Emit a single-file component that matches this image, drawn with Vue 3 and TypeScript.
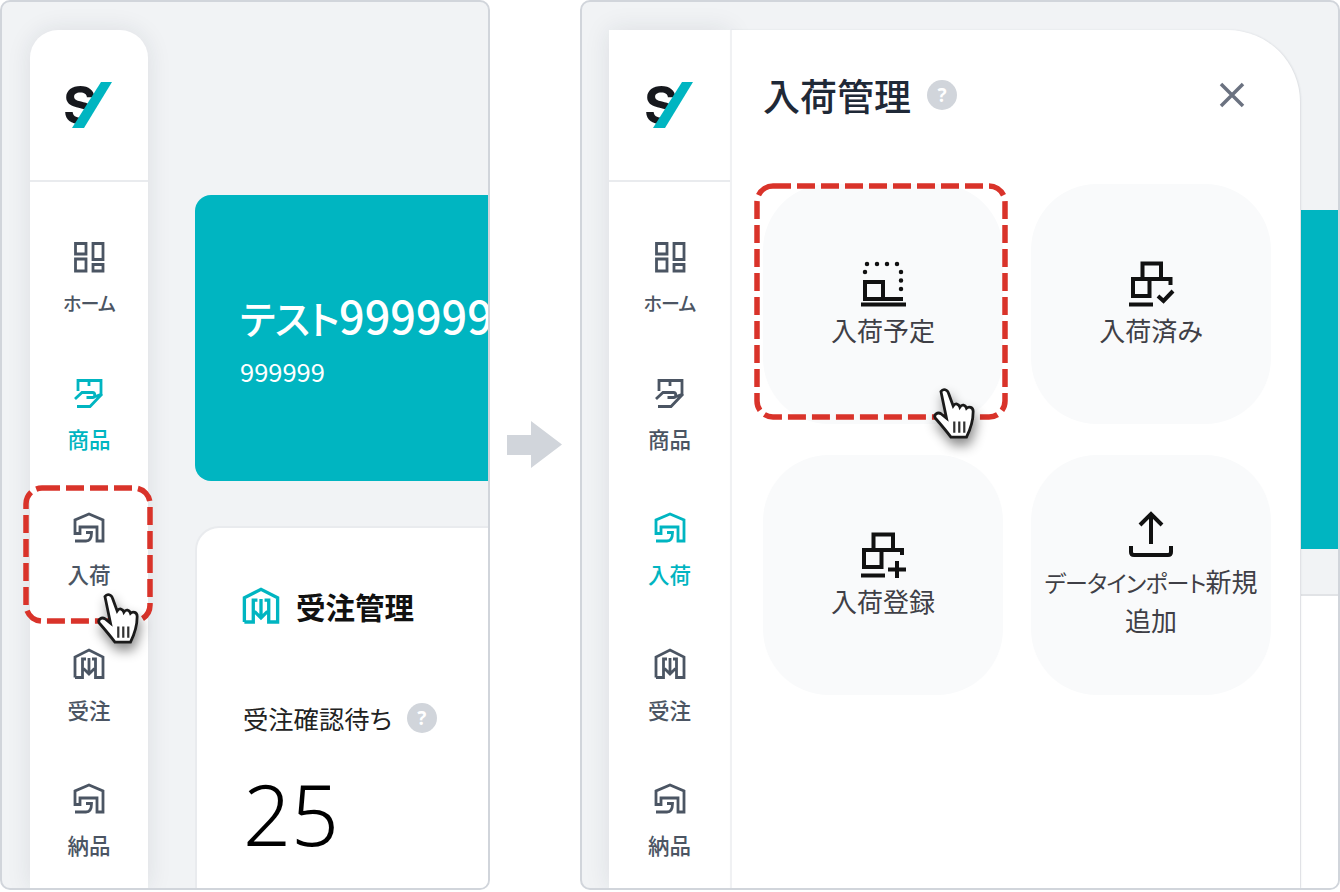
<script setup lang="ts">
interface NavItem {
  label: string;
  icon: 'home' | 'product' | 'arrival' | 'order';
  active?: boolean;
  kana?: boolean;
}

interface Tile {
  kana?: string;
  label: string;
  icon: 'planned' | 'done' | 'add' | 'upload';
}

const iconPaths: Record<string, string> = {
  home: 'M2.500 2.500H13V13H2.500ZM20 2.500H30V18.500H20ZM2.500 18H13V30H2.500ZM20 23.500H30V30H20Z',
  product: 'M5 14V3.500H28V17M16 3.500V9M2 22L9 15.500H19.500C22.500 15.500 22.500 20.500 19.500 20.500H13.500M19.500 20.500L29 17L17 29.500H4',
  arrival: 'M2 21.500V8L16 2L30 8V29H24V15H7V21.500ZM2 29H13C16.500 29 18.500 26.500 18.500 20.500H13',
  order: 'M2 29.500V9L16 2L30 9V29.500H22.500V11H19M2 29.500H9.500V11H13M16 10V26M10.500 20.500L16 26L21.500 20.500',
};

const tileIcons: Record<string, string> = {
  done: 'M14.500 3.500H33V19H14.500ZM5 19H21.500V36H5ZM21.500 19H42.500V25M1 44.500H25M30 36L35.500 41L45 31',
  add: 'M13.500 3.500H33V19H13.500ZM4 19H21.500V36H4ZM21.500 19H42V24M1 44.500H25M37 30V47M28 38.500H46',
  planned: 'M5 22H23V39H5ZM23 39H43M1 44.500H46',
  upload: 'M23 4V33M12 14L23 3L34 14M3 35V41C3 43 4 44 6 44H40C42 44 43 43 43 41V35',
};

// the dotted outline of the planned-arrival box
const plannedDots = 'M7 4h0M17 4h0M27 4h0M37 4h0M5 12h0M41 12h0M41 20.500h0M41 29h0';

const navItems: NavItem[] = [
  { label: 'ホーム', icon: 'home', kana: true },
  { label: '商品', icon: 'product', active: true },
  { label: '入荷', icon: 'arrival' },
  { label: '受注', icon: 'order' },
  { label: '納品', icon: 'arrival' },
];

const drawerNavItems: NavItem[] = navItems.map((item) => ({
  ...item,
  active: item.label === '入荷',
}));

const tiles: Tile[] = [
  { label: '入荷予定', icon: 'planned' },
  { label: '入荷済み', icon: 'done' },
  { label: '入荷登録', icon: 'add' },
  { kana: 'データインポート', label: '新規追加', icon: 'upload' },
];
</script>

<template>
  <div class="page">
    <!-- Before -->
    <section class="frame frame-left">
      <aside class="sidebar sidebar-rounded">
        <div class="logo-box">
          <svg class="logo" viewBox="0 0 50 46">
            <text x="-1" y="42" class="logo-s">S</text>
            <path d="M37 -1H60V47H20Z" fill="#fff" />
            <path d="M37 0H48L20 46H8Z" fill="#00b5c1" />
          </svg>
        </div>
        <nav class="nav">
          <div v-for="item in navItems" :key="item.label" class="nav-item" :class="{ active: item.active }">
            <svg class="nav-icon" viewBox="0 0 32 32">
              <path :d="iconPaths[item.icon]" />
            </svg>
            <span :class="{ 'kana-nav': item.kana }">{{ item.label }}</span>
          </div>
        </nav>
      </aside>
      <main class="content">
        <div class="hero">
          <div class="hero-name"><span class="kana-hero">テスト</span>999999</div>
          <div class="hero-code">999999</div>
        </div>
        <div class="order-card">
          <div class="order-title">
            <svg class="order-icon" viewBox="0 0 32 32">
              <path :d="iconPaths.order" />
            </svg>
            <span>受注管理</span>
          </div>
          <div class="order-label">
            <span>受注確認待ち</span>
            <span class="help">?</span>
          </div>
          <div class="order-count">25</div>
        </div>
      </main>
      <svg class="dash dash-nav" viewBox="0 0 130 139">
        <rect x="3" y="3" width="124" height="133" rx="16" />
      </svg>
      <svg class="cursor cursor-nav" viewBox="0 0 44 54">
        <path class="cursor-body" d="M8 5C10 2 14 3 15 7L19 18C21 15 24 16 25 19C27 16 30 17 31 20C33 18 37 19 37 23C37 30 35 38 31 46H17C14 42 10 37 3 29C1 26 5 23 8 25L13 29Z" />
        <path class="cursor-lines" d="M20 32V42M24.500 32V42M29 32V42" />
      </svg>
    </section>

    <div class="arrow-col">
      <svg class="arrow" viewBox="0 0 56 48">
        <path d="M0 14H24V0L55 23.500L24 47V34H0Z" fill="#d1d5db" />
      </svg>
    </div>

    <!-- After -->
    <section class="frame frame-right">
      <div class="strip">
        <div class="strip-teal"></div>
        <div class="strip-white"></div>
      </div>
      <aside class="sidebar sidebar-flat">
        <div class="logo-box">
          <svg class="logo" viewBox="0 0 50 46">
            <text x="-1" y="42" class="logo-s">S</text>
            <path d="M37 -1H60V47H20Z" fill="#fff" />
            <path d="M37 0H48L20 46H8Z" fill="#00b5c1" />
          </svg>
        </div>
        <nav class="nav">
          <div v-for="item in drawerNavItems" :key="item.label" class="nav-item" :class="{ active: item.active }">
            <svg class="nav-icon" viewBox="0 0 32 32">
              <path :d="iconPaths[item.icon]" />
            </svg>
            <span :class="{ 'kana-nav': item.kana }">{{ item.label }}</span>
          </div>
        </nav>
      </aside>
      <div class="drawer">
        <header class="drawer-head">
          <h2>入荷管理</h2>
          <span class="help">?</span>
          <svg class="close" viewBox="0 0 26 26">
            <path d="M2 2L24 24M24 2L2 24" />
          </svg>
        </header>
        <div class="tiles">
          <div v-for="tile in tiles" :key="tile.label" class="tile">
            <svg class="tile-icon" viewBox="0 0 47 48">
              <path :d="tileIcons[tile.icon]" />
              <path v-if="tile.icon === 'planned'" class="dots" :d="plannedDots" />
            </svg>
            <span class="tile-label"><span v-if="tile.kana" class="kana-tile">{{ tile.kana }}</span>{{ tile.label }}</span>
          </div>
        </div>
      </div>
      <svg class="dash dash-tile" viewBox="0 0 254 237">
        <rect x="3" y="3" width="248" height="231" rx="16" />
      </svg>
      <svg class="cursor cursor-tile" viewBox="0 0 44 54">
        <path class="cursor-body" d="M8 5C10 2 14 3 15 7L19 18C21 15 24 16 25 19C27 16 30 17 31 20C33 18 37 19 37 23C37 30 35 38 31 46H17C14 42 10 37 3 29C1 26 5 23 8 25L13 29Z" />
        <path class="cursor-lines" d="M20 32V42M24.500 32V42M29 32V42" />
      </svg>
    </section>
  </div>
</template>

<style>
html,
body {
  margin: 0;
  background: #fff;
}
</style>

<style scoped>
.page {
  display: flex;
  width: 1340px;
  height: 892px;
  overflow: hidden;
  background: #fff;
  font-family: "Noto Sans CJK JP", "Noto Sans", sans-serif;
  font-feature-settings: "palt";
}

.frame {
  position: relative;
  box-sizing: border-box;
  display: flex;
  height: 890px;
  border: 2px solid #d1d5db;
  border-radius: 10px;
  background: #f1f3f5;
  overflow: hidden;
}

.frame-left {
  width: 490px;
  padding: 28px 0 0 28px;
}

.frame-right {
  width: 760px;
  padding: 28px 0 0 27px;
}

.arrow-col {
  width: 90px;
  display: flex;
  align-items: center;
  justify-content: center;
}

.arrow {
  width: 56px;
  height: 48px;
  margin-top: -3px;
}

.sidebar {
  flex: none;
  background: #fff;
  box-shadow: 0 0 24px rgba(31, 41, 55, 0.1);
}

.sidebar-rounded {
  width: 118px;
  border-radius: 28px 28px 0 0;
}

.sidebar-flat {
  width: 121px;
  position: relative;
}

.logo-box {
  height: 152px;
  box-sizing: border-box;
  border-bottom: 2px solid #e9ebee;
  display: flex;
  justify-content: center;
  padding-top: 52px;
}

.logo {
  width: 50px;
  height: 46px;
  overflow: visible;
}

.logo-s {
  font-family: "Inter", "Noto Sans", sans-serif;
  font-size: 52px;
  font-weight: 700;
  fill: #16181d;
}

.nav {
  display: flex;
  flex-direction: column;
  padding-top: 59px;
}

.nav-item {
  height: 135.5px;
  display: flex;
  flex-direction: column;
  align-items: center;
  gap: 15px;
  color: #4b5563;
  font-size: 21.500px;
  line-height: 30px;
  font-weight: 500;
}

.nav-item.active {
  color: #00b5c1;
}

.kana-nav {
  font-size: 19px;
  letter-spacing: -0.800px;
}

.nav-icon {
  width: 32px;
  height: 32px;
  flex: none;
}

.nav-icon path,
.order-icon path {
  fill: none;
  stroke: currentColor;
  stroke-width: 2.800;
}

.content {
  flex: 1;
  min-width: 0;
  padding: 165px 0 0 47px;
}

.hero {
  box-sizing: border-box;
  height: 286px;
  padding: 92px 0 0 45px;
  background: #00b5c1;
  border-radius: 16px 0 0 16px;
  color: #fff;
  overflow: hidden;
  white-space: nowrap;
}

.hero-name {
  font-size: 45px;
  line-height: 56px;
  font-weight: 500;
}

.kana-hero {
  font-size: 39px;
  letter-spacing: -0.500px;
}

.hero-code {
  font-size: 25.500px;
  line-height: 36px;
  margin-top: 8px;
}

.order-card {
  box-sizing: border-box;
  margin-top: 45px;
  height: 400px;
  padding: 56px 0 0 45px;
  background: #fff;
  border: 2px solid #e9ebee;
  border-right: 0;
  border-radius: 24px 0 0 0;
  color: #111;
}

.order-title {
  display: flex;
  align-items: center;
  gap: 16px;
  height: 44px;
  font-size: 29.500px;
  font-weight: 700;
}

.order-icon {
  width: 38px;
  height: 38px;
  color: #00b5c1;
}

.order-label {
  display: flex;
  align-items: center;
  gap: 15px;
  margin: 70px 0 0 1px;
  height: 40px;
  font-size: 25.300px;
  color: #222;
}

.help {
  flex: none;
  width: 30px;
  height: 30px;
  border-radius: 50%;
  background: #d1d5db;
  color: #fff;
  font-size: 19px;
  font-weight: 700;
  line-height: 30px;
  text-align: center;
  font-family: "Noto Sans", sans-serif;
}

.order-count {
  margin: 26px 0 0 1px;
  font-family: "Noto Sans", sans-serif;
  font-size: 84px;
  line-height: 100px;
  font-weight: 300;
  color: #000;
}

.strip {
  position: absolute;
  right: 0;
  top: 208px;
  width: 37px;
  bottom: 0;
  display: flex;
  flex-direction: column;
}

.strip-teal {
  height: 339px;
  background: #00b5c1;
}

.strip-white {
  margin-top: 45px;
  flex: 1;
  background: #fff;
  border-top: 2px solid #e1e3e6;
}

.drawer {
  position: relative;
  box-sizing: border-box;
  width: 570px;
  padding-left: 31px;
  background: #fff;
  border-left: 2px solid #f0f1f3;
  border-radius: 0 72px 0 0;
  box-shadow: 1px 0 2px rgba(31, 41, 55, 0.1);
}

.drawer-head {
  display: flex;
  align-items: center;
  height: 154px;
  padding-bottom: 24px;
  box-sizing: border-box;
}

.drawer-head h2 {
  margin: 0 16px 0 0;
  font-size: 37px;
  font-weight: 500;
  color: #1f2937;
  line-height: 44px;
}

.close {
  width: 26px;
  height: 26px;
  margin-left: 262px;
}

.close path {
  fill: none;
  stroke: #6b7280;
  stroke-width: 3.500;
}

.tiles {
  display: grid;
  grid-template-columns: 240px 240px;
  grid-auto-rows: 240px;
  column-gap: 28px;
  row-gap: 31px;
}

.tile {
  box-sizing: border-box;
  background: #f9fafb;
  border-radius: 66px;
  display: flex;
  flex-direction: column;
  align-items: center;
  justify-content: center;
  padding: 0 10px;
  text-align: center;
  color: #3f3f46;
  font-size: 26px;
  line-height: 38px;
}

.tile-icon {
  width: 47px;
  height: 48px;
  flex: none;
}

.tile-icon path {
  fill: none;
  stroke: #111;
  stroke-width: 4;
}

.tile-icon .dots {
  stroke-width: 4.500;
  stroke-linecap: round;
}

.tile-label {
  margin-top: 3px;
}

.kana-tile {
  font-size: 23px;
  letter-spacing: -0.800px;
}

.dash {
  position: absolute;
  fill: none;
  stroke: #d9332a;
  stroke-width: 5.500;
  stroke-dasharray: 18 6;
}

.dash-nav {
  left: 21px;
  top: 483px;
  width: 130px;
  height: 139px;
}

.dash-tile {
  left: 172px;
  top: 181px;
  width: 254px;
  height: 237px;
}

.cursor {
  position: absolute;
  width: 49px;
  height: 60px;
  filter: drop-shadow(2px 7px 6px rgba(0, 0, 0, 0.45));
}

.cursor-nav {
  left: 94px;
  top: 589px;
}

.cursor-tile {
  left: 350px;
  top: 384px;
}

.cursor-body {
  fill: #fff;
  stroke: #1a1a1a;
  stroke-width: 2.500;
}

.cursor-lines {
  fill: none;
  stroke: #333;
  stroke-width: 2;
}
</style>
